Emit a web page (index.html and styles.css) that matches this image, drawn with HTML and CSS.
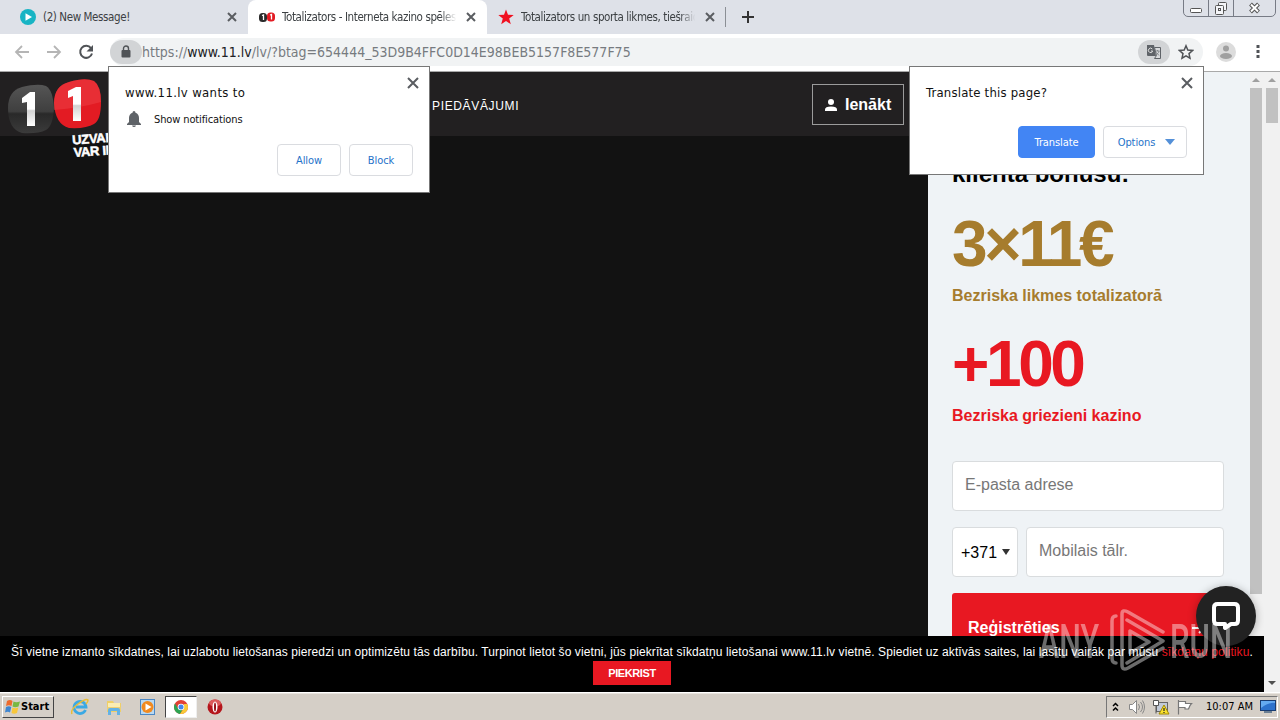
FILE: index.html
```html
<!DOCTYPE html>
<html lang="lv">
<head>
    <meta charset="UTF-8">
    <meta name="viewport" content="width=device-width, initial-scale=1.0">
    <title>Totalizators - Interneta kazino spēles</title>
    <link rel="stylesheet" href="styles.css">
</head>
<body>
<div class="screen">

    <!-- Browser tabs -->
    <div class="tabs">
        <div class="tab first">
            <svg class="favicon" width="16" height="16" viewBox="0 0 16 16"><circle cx="8" cy="8" r="8" fill="#18b4c4"/><path d="M5.500 4.200L12 8l-6.500 3.800z" fill="#fff"/></svg>
            <span class="tab-title t1">(2) New Message!</span>
            <svg class="close" width="10" height="10" viewBox="0 0 10 10"><path d="M1 1l8 8M9 1L1 9"/></svg>
        </div>
        <div class="tab active">
            <svg class="favicon" width="16" height="16" viewBox="0 0 16 16"><rect x="0" y="4" width="8" height="9" rx="3.500" fill="#2b2b2b"/><rect x="8" y="3.500" width="8" height="9" rx="3.500" fill="#e31b23"/><path d="M3 6.500l1.500-.5v5M11 6l1.500-.5v5" stroke="#fff" stroke-width="1.300" fill="none"/></svg>
            <span class="tab-title t2">Totalizators - Interneta kazino spēles</span>
            <svg class="close" width="10" height="10" viewBox="0 0 10 10"><path d="M1 1l8 8M9 1L1 9"/></svg>
        </div>
        <div class="tab last">
            <svg class="favicon" width="16" height="16" viewBox="0 0 16 16"><path d="M8 .5l2 5.300 5.700.2-4.500 3.500 1.600 5.700L8 12l-4.800 3.200 1.600-5.700L.3 6l5.700-.2z" fill="#f01020"/></svg>
            <span class="tab-title t3">Totalizators un sporta likmes, tiešraides</span>
            <svg class="close" width="10" height="10" viewBox="0 0 10 10"><path d="M1 1l8 8M9 1L1 9"/></svg>
        </div>
        <svg class="new-tab" width="12" height="12" viewBox="0 0 12 12"><path d="M6 0v12M0 6h12" stroke="#333" stroke-width="2"/></svg>
        <div class="window-buttons">
            <span class="wb-min"><svg width="24" height="16" viewBox="0 0 24 16"><rect x="6.500" y="8.500" width="11" height="4" rx="1" fill="#fff" stroke="#555"/></svg></span>
            <span class="wb-max"><svg width="24" height="16" viewBox="0 0 24 16"><g fill="#f4f5f8" stroke="#555"><rect x="9.500" y="2.500" width="8" height="8" rx="1"/><rect x="6.500" y="5.500" width="8" height="9" rx="1"/><rect x="9.500" y="8.500" width="2" height="2"/></g></svg></span>
            <span class="wb-close"><svg width="41" height="16" viewBox="0 0 41 16"><path d="M16.500 4l8 8M24.500 4l-8 8" stroke="#555" stroke-width="4"/><path d="M17 4.500l7 7M24 4.500l-7 7" stroke="#fff" stroke-width="2"/></svg></span>
        </div>
    </div>

    <!-- Address bar -->
    <div class="toolbar">
        <svg class="nav-icon" width="16" height="16" viewBox="0 0 16 16"><path d="M15 8H2M8 2L2 8l6 6" stroke="#b5b5b5" stroke-width="1.800" fill="none"/></svg>
        <svg class="nav-icon" width="16" height="16" viewBox="0 0 16 16"><path d="M1 8h13M8 2l6 6-6 6" stroke="#b5b5b5" stroke-width="1.800" fill="none"/></svg>
        <svg class="nav-icon" width="16" height="16" viewBox="0 0 16 16"><path d="M13 4.200A6 6 0 1 0 14 9.500" stroke="#505357" stroke-width="2" fill="none"/><path d="M15 1v6.500H8.500z" fill="#505357"/></svg>
        <div class="omnibox">
            <span class="lock"><svg width="10" height="13" viewBox="0 0 10 13"><path d="M2.500 6V3.500a2.500 2.500 0 0 1 5 0V6" stroke="#505357" stroke-width="1.400" fill="none"/><rect x="0.500" y="5" width="9" height="7.500" rx="1" fill="#505357"/></svg></span>
            <span class="url">https://<b>www.11.lv</b>/lv/?btag=654444_53D9B4FFC0D14E98BEB5157F8E577F75</span>
            <span class="translate-icon"><svg width="16" height="16" viewBox="0 0 16 16"><path d="M1 1h7l2 11H2a1 1 0 0 1-1-1z" fill="#5f6368"/><path d="M8.500 3.500h6v11h-6l2-3z" fill="#d8dadc" stroke="#5f6368"/><path d="M9.500 7h4M11.500 6v1M13 7c0 2-2 3-3 4M10.500 8.500l2.500 3" fill="none" stroke="#85898c"/><path d="M6.300 5A2.200 2.200 0 1 0 6.700 7H5" fill="none" stroke="#ddd"/></svg></span>
            <svg class="star" width="16" height="16" viewBox="0 0 16 16"><path d="M8 1.800l1.800 4.300 4.700.4-3.500 3.100 1 4.600L8 11.800l-4 2.400 1-4.600L1.500 6.500l4.700-.4z" fill="none" stroke="#505357" stroke-width="1.500"/></svg>
        </div>
        <svg class="avatar" width="20" height="20" viewBox="0 0 20 20"><circle cx="10" cy="10" r="10" fill="#dcdcdc"/><circle cx="10" cy="6.500" r="3" fill="#a0a0a0"/><ellipse cx="10" cy="14" rx="6" ry="3" fill="#a0a0a0"/></svg>
        <svg class="menu" width="4" height="16" viewBox="0 0 4 16"><path d="M.5 1h3v3h-3zM.5 6h3v3h-3zM.5 11h3v3h-3z" fill="#505357"/></svg>
    </div>

    <!-- Web page -->
    <div class="viewport">
        <div class="page">
            <div class="main">
                <header>
                    <svg class="logo" width="110" height="92" viewBox="0 0 110 92">
                        <defs>
                            <linearGradient id="gray" x1="0" y1="0" x2="0" y2="1"><stop offset="0" stop-color="#555"/><stop offset=".55" stop-color="#3f3f3f"/><stop offset=".6" stop-color="#292929"/><stop offset="1" stop-color="#3b3b3b"/></linearGradient>
                            <linearGradient id="digit" x1="0" y1="0" x2="0" y2="1"><stop offset=".5" stop-color="#fff"/><stop offset=".55" stop-color="#d2d2d2"/><stop offset="1" stop-color="#fff"/></linearGradient>
                        </defs>
                        <path d="M8 36Q8 19 22 15Q38 11 46 14Q53 18 54 36Q53 54 46 58Q38 62 22 61Q8 57 8 36Z" fill="url(#gray)"/>
                        <path d="M54 31Q54 14 69 10Q85 5 94 9Q101 14 101 30Q101 48 94 52Q86 57 69 56Q55 52 54 31Z" fill="#e31b23"/>
                        <path d="M54 38Q80 36 101 30Q101 14 94 9Q85 5 69 10Q54 14 54 31Z" fill="#ef4a50" opacity=".4"/>
                        <path d="M22 26L30 20h5v34h-8V30l-5 1z" fill="url(#digit)"/>
                        <path d="M68 19l8-4h5v34h-8V24l-5 2z" fill="url(#digit)"/>
                        <g class="slogan" transform="rotate(-4 73 72)"><text x="72.500" y="72.500">UZVARA</text><text x="73" y="85">VAR IR</text></g>
                    </svg>
                    <span class="nav-link">PIEDĀVĀJUMI</span>
                    <a class="login"><svg width="12" height="12" viewBox="0 0 12 12"><circle cx="6" cy="3" r="3" fill="#fff"/><path d="M0 12V10.500Q0 7.500 6 7.500T12 10.500V12z" fill="#fff"/></svg>Ienākt</a>
                </header>
            </div>
            <aside class="sidebar">
                <h2>klienta bonusu:</h2>
                <div class="amount gold">3×11€</div>
                <p class="gold">Bezriska likmes totalizatorā</p>
                <div class="amount red">+100</div>
                <p class="red">Bezriska griezieni kazino</p>
                <div class="field email">E-pasta adrese</div>
                <div class="phone-row">
                    <div class="field prefix">+371 <i class="caret"></i></div>
                    <div class="field phone">Mobilais tālr.</div>
                </div>
                <div class="register"><span>Reģistrēties</span><svg width="14" height="12" viewBox="0 0 14 12"><path d="M0 6h12M7 1l5 5-5 5" stroke="#fff" stroke-width="2" fill="none"/></svg></div>
            </aside>
            <div class="scrollbar inner"><i class="arrow-up"></i><div class="thumb"></div></div>
            <div class="cookies">
                <div class="cookie-text">Šī vietne izmanto sīkdatnes, lai uzlabotu lietošanas pieredzi un optimizētu tās darbību. Turpinot lietot šo vietni, jūs piekrītat sīkdatņu lietošanai www.11.lv vietnē. Spiediet uz aktīvās saites, lai lasītu vairāk par mūsu <a>sīkdatņu politiku</a>.</div>
                <div class="accept">PIEKRIST</div>
            </div>
            <div class="chat"><svg width="30" height="30" viewBox="0 0 30 30"><path d="M6.500 3h17Q27 3 27 6.500v13Q27 23 23.500 23H20l-6 4v-4H6.500Q3 23 3 19.500v-13Q3 3 6.500 3z" fill="none" stroke="#fff" stroke-width="4" stroke-linejoin="round"/></svg></div>
        </div>
        <div class="scrollbar outer"><i class="arrow-up"></i><div class="thumb"></div><i class="arrow-down"></i></div>
    </div>

    <!-- Windows taskbar -->
    <div class="taskbar">
        <div class="start"><svg width="16" height="16" viewBox="0 0 16 16"><path d="M2 2q3-2 5.500 0L6.500 7Q4 5.500 1 7z" fill="#ee6b2d"/><path d="M8.500 2.500Q11 4 15 2.500l-1.500 5Q10 9 7.500 7.500z" fill="#78b843"/><path d="M1 8q3-1.500 5.300 0L5 13.500Q3 12 0 13.500z" fill="#3f86d0"/><path d="M7.500 8.500Q10 10 13.300 8.500L12 14q-3 1.500-5.500 0z" fill="#f8c73a"/></svg>Start</div>
        <div class="quick">
            <svg width="18" height="18" viewBox="0 0 18 18"><path d="M14.500 12A6 6 0 1 1 15 9H5" fill="none" stroke="#3ba9e4" stroke-width="2.800"/><path d="M1 16Q-1 12 7 6T17 2q0 2-2 4" fill="none" stroke="#e9bd37" stroke-width="1.500"/></svg>
            <svg width="18" height="18" viewBox="0 0 18 18"><path d="M2 3h6l1 2h7v9H2z" fill="#efcf67"/><path d="M3 5h12v5H3z" fill="#fbedb2"/><path d="M2 9h14v3H2z" fill="#edcf76"/><path d="M3 17v-5q0-2 2-2h8q2 0 2 2v5h-3v-4H6v4z" fill="#64b2e5"/></svg>
            <svg width="18" height="18" viewBox="0 0 18 18"><rect x="1.500" y="1.500" width="14" height="15" fill="#b9d9f2" stroke="#4b88c5"/><circle cx="8.500" cy="9" r="6" fill="#f18a20"/><path d="M6.500 5.500l6 3.500-6 3.500z" fill="#fff"/></svg>
            <div class="running"><svg width="14" height="14" viewBox="0 0 14 14"><circle cx="7" cy="7" r="7" fill="#e24034"/><path d="M1 3.500A7 7 0 0 0 6 14l3-5-5-.5z" fill="#2ca452"/><path d="M14 7a7 7 0 0 1-8 7l4-6V4h3.300z" fill="#f8ca37"/><circle cx="7" cy="7" r="3.300" fill="#fff"/><circle cx="7" cy="7" r="2.500" fill="#4386ec"/></svg></div>
            <svg class="opera" width="18" height="18" viewBox="0 0 18 18"><circle cx="9" cy="9" r="7.500" fill="#b5161c"/><ellipse cx="9" cy="5" rx="6" ry="3.500" fill="#dc5b5b"/><ellipse cx="9" cy="9" rx="2.500" ry="5.500" fill="#fff"/><ellipse cx="9" cy="9" rx="1" ry="4.500" fill="#941015"/></svg>
        </div>
        <div class="tray">
            <svg width="7" height="10" viewBox="0 0 7 10"><path d="M1 4l2.500-2.500L6 4M1 8.500L3.500 6 6 8.500" fill="none" stroke="#000" stroke-width="1.500"/></svg>
            <svg width="18" height="16" viewBox="0 0 18 16"><path d="M1.500 5.500h3l4-4v13l-4-4h-3z" fill="#fff" stroke="#888"/><path d="M10.500 5q2 3 0 6M12.500 3q4 5 0 10M14.500 1.500q4 6.500 0 13" fill="none" stroke="#888"/></svg>
            <svg width="18" height="16" viewBox="0 0 18 16"><rect x="4.500" y="3.500" width="11" height="9" fill="#c2cad7" stroke="#666"/><path d="M1.500 1.500h5v5h-5zM4 7v7.500" fill="#fff" stroke="#555"/><path d="M12 6l5 9H7z" fill="#fae12e" stroke="#a38a00"/><path d="M12 9v3M12 13v1" stroke="#222" stroke-width="1.200"/></svg>
            <svg width="18" height="16" viewBox="0 0 18 16"><path d="M2.500 1v14.500M2.500 2.500h7v2h6q-2 2-3 5.500H9V8.500H2.500" fill="#fff" stroke="#777" stroke-width="1.200"/></svg>
            <span class="clock">10:07 AM</span>
            <svg width="16" height="13" viewBox="0 0 16 13"><rect x=".5" y=".5" width="15" height="10" fill="#2d72cc" stroke="#183c72"/><path d="M1 8Q8 2 15 3V1H1z" fill="#65aaf0"/><path d="M4 12h8" stroke="#6b7f93" stroke-width="2"/></svg>
        </div>
    </div>

    <!-- Permission popup -->
    <div class="popup permission">
        <svg class="close" width="12" height="12" viewBox="0 0 12 12"><path d="M1 1l10 10M11 1L1 11"/></svg>
        <div class="popup-title">www.11.lv wants to</div>
        <div class="request"><svg width="14" height="16" viewBox="0 0 14 16"><path d="M7 0q1.500 0 1.500 1.800Q12 3 12 7v4l2 2v1H0v-1l2-2V7q0-4 3.500-5.200Q5.500 0 7 0zM5 14.500h4Q8.500 16 7 16T5 14.500z" fill="#5f6368"/></svg><span>Show notifications</span></div>
        <div class="actions"><div class="btn">Allow</div><div class="btn">Block</div></div>
    </div>

    <!-- Translate popup -->
    <div class="popup translate">
        <svg class="close" width="12" height="12" viewBox="0 0 12 12"><path d="M1 1l10 10M11 1L1 11"/></svg>
        <div class="popup-title">Translate this page?</div>
        <div class="actions"><div class="btn primary">Translate</div><div class="btn options">Options <i class="caret"></i></div></div>
    </div>

    <svg class="watermark" width="200" height="66" viewBox="0 0 200 66">
        <text class="wm-text" x="3" y="50" textLength="60" lengthAdjust="spacingAndGlyphs">ANY</text>
        <text class="wm-text" x="134" y="50" textLength="62" lengthAdjust="spacingAndGlyphs">RUN</text>
        <g fill="none" stroke="#fff" stroke-width="3.500" stroke-linejoin="round" stroke-linecap="round"><path d="M80 8q-4 0-4 5v37q0 5 4 5M86 16V6q0-5 6-2l35 20M86 14v43q0 6 6 3l35-20M91 12l36 21-36 22M94 23v22l19-11z"/></g>
    </svg>
</div>
</body>
</html>
```
FILE: styles.css
```css
* {
    box-sizing: border-box;
}
body {
    margin: 0;
    font-family: "Liberation Sans", Arial, sans-serif;
    background: #121212;
}
svg {
    display: block;
    flex: none;
}
h2, p {
    margin: 0;
}
.screen {
    position: relative;
    width: 1280px;
    height: 720px;
    overflow: hidden;
    display: flex;
    flex-direction: column;
}

/* Tabs */
.tabs, .toolbar, .popup, .taskbar {
    font-family: "DejaVu Sans Condensed", "DejaVu Sans", sans-serif;
    font-stretch: condensed;
}
.tabs {
    height: 34px;
    display: flex;
    align-items: center;
    background: #dee1e8;
}
.tab {
    display: flex;
    align-items: center;
    height: 34px;
    font-size: 11.5px;
    letter-spacing: -0.4px;
    color: #3c4043;
}
.first {
    width: 248px;
    padding: 0 11px 0 20px;
}
.active {
    width: 239px;
    padding: 0 11px;
    background: #fff;
    border-radius: 8px 8px 0 0;
}
.last {
    width: 239px;
    padding: 0 10px 0 11px;
    height: 20px;
    border-right: 1px solid #8b8f95;
}
.tab-title {
    flex: 1;
    margin: 0 8px 0 7px;
    white-space: nowrap;
    overflow: hidden;
}
.t2, .t3 {
    -webkit-mask-image: linear-gradient(to right, #000 90%, transparent 99%);
    mask-image: linear-gradient(to right, #000 90%, transparent 99%);
}
.close {
    fill: none;
    stroke: #5a5d61;
    stroke-width: 2;
}
.new-tab {
    margin-left: 16px;
}
.window-buttons {
    display: flex;
    align-self: flex-start;
    margin: -1px 4px 0 auto;
    height: 18px;
    border: 1px solid #777b85;
    border-radius: 0 0 5px 5px;
}
.wb-max {
    border: solid #777b85;
    border-width: 0 1px;
}

/* Toolbar */
.toolbar {
    height: 38px;
    padding: 0 20px 2px 14px;
    display: flex;
    align-items: center;
    background: #fff;
    border-bottom: 1px solid #a9a9a9;
}
.nav-icon {
    margin-right: 16px;
}
.omnibox {
    width: 1093px;
    height: 28px;
    border-radius: 14px;
    background: #f1f3f4;
    display: flex;
    align-items: center;
    margin-right: 13px;
}
.lock, .translate-icon {
    width: 32px;
    height: 24px;
    border-radius: 12px;
    background: #d2d4d6;
    display: flex;
    align-items: center;
    justify-content: center;
}
.url {
    font-size: 14px;
    color: #777b80;
    white-space: nowrap;
}
.url b {
    font-weight: normal;
    color: #202124;
}
.translate-icon {
    margin-left: auto;
}
.star {
    margin: 0 9px 0 8px;
}
.menu {
    margin-left: auto;
}

/* Page */
.viewport {
    height: 620px;
    display: flex;
}
.page {
    position: relative;
    width: 1264px;
    display: flex;
    overflow: hidden;
}
.main {
    width: 928px;
    background: #121212;
}
header {
    height: 64px;
    background: #222021;
    display: flex;
    align-items: flex-start;
}
.slogan {
    font-size: 13px;
    font-weight: bold;
    fill: #fff;
    stroke: #fff;
    stroke-width: 0.5px;
    letter-spacing: -0.3px;
}
.nav-link {
    margin: 26px 0 0 322px;
    font-size: 12px;
    line-height: 16px;
    letter-spacing: 0.65px;
    color: #fff;
}
.login {
    width: 92px;
    height: 41px;
    margin: 12px 24px 0 auto;
    padding-left: 12px;
    border: 1px solid #9b9b9b;
    display: flex;
    align-items: center;
    gap: 8px;
    color: #fff;
    font-size: 16px;
    font-weight: bold;
}
.sidebar {
    width: 322px;
    padding: 86px 26px 0 24px;
    background: #eff3f6;
}
h2 {
    font-size: 24px;
    line-height: 32px;
}
.amount {
    margin-top: 19px;
    font-size: 64px;
    line-height: 70px;
    font-weight: bold;
    letter-spacing: -3.4px;
}
.amount.red {
    margin-top: 23px;
}
.sidebar p {
    margin-top: 7px;
    font-size: 16px;
    line-height: 20px;
    font-weight: bold;
}
.gold {
    color: #a67c2d;
}
.red {
    color: #e81822;
}
.field {
    height: 50px;
    padding: 0 0 2px 12px;
    display: flex;
    align-items: center;
    background: #fff;
    border: 1px solid #d9dcde;
    border-radius: 4px;
    font-size: 16px;
    color: #777;
}
.email {
    margin-top: 35px;
}
.phone-row {
    margin-top: 16px;
    display: flex;
    gap: 8px;
}
.prefix {
    width: 66px;
    padding: 2px 0 0 8px;
    color: #000;
}
.phone {
    flex: 1;
}
.caret {
    margin-left: 5px;
    border: solid transparent;
    border-width: 6px 4px 0;
    border-top-color: #333;
}
.prefix .caret {
    margin-bottom: 3px;
}
.register {
    height: 70px;
    margin-top: 16px;
    padding: 0 18px 0 16px;
    display: flex;
    align-items: center;
    justify-content: space-between;
    background: #e81822;
    border-radius: 3px 3px 0 0;
    color: #fff;
    font-size: 16px;
    font-weight: bold;
}
.scrollbar {
    display: flex;
    flex-direction: column;
    align-items: center;
    background: #f1f1f1;
}
.inner {
    width: 14px;
    padding-right: 2px;
}
.outer {
    width: 16px;
}
.scrollbar .thumb {
    width: 12px;
    background: #c1c1c1;
}
.inner .thumb {
    height: 506px;
}
.outer .thumb {
    height: 35px;
}
.arrow-up {
    margin: 6px 0;
    border: solid transparent;
    border-width: 0 4px 4px;
    border-bottom-color: #a0a0a0;
}
.arrow-down {
    margin: auto 0 7px;
    border: solid transparent;
    border-width: 4px 4px 0;
    border-top-color: #505050;
}
.cookies {
    position: absolute;
    left: 0;
    bottom: 0;
    width: 1264px;
    height: 56px;
    padding-top: 8px;
    background: #000;
    color: #fff;
    display: flex;
    flex-direction: column;
    align-items: center;
    gap: 1px;
}
.cookie-text {
    font-size: 12px;
    line-height: 16px;
    letter-spacing: 0.1px;
    white-space: nowrap;
}
.cookies a {
    color: #e81822;
}
.accept {
    width: 78px;
    height: 24px;
    background: #e81822;
    font-size: 11px;
    font-weight: bold;
    letter-spacing: -0.4px;
    line-height: 24px;
    text-align: center;
}
.chat {
    position: absolute;
    right: 8px;
    bottom: 46px;
    width: 60px;
    height: 60px;
    border-radius: 50%;
    background: #222;
    box-shadow: 0 1px 8px rgba(0, 0, 0, 0.3);
    display: flex;
    align-items: center;
    justify-content: center;
}

/* Taskbar */
.taskbar {
    height: 28px;
    background: #d5cfc7;
    border-top: 1px solid #fff;
    box-shadow: inset 0 1px #e8e4de;
    display: flex;
    align-items: center;
    font-size: 11px;
}
.start {
    width: 52px;
    height: 22px;
    margin-left: 2px;
    padding-left: 2px;
    display: flex;
    align-items: center;
    background: #d5cfc7;
    border: 1px solid #fff;
    border-right-color: #444;
    border-bottom-color: #444;
    font-size: 11px;
    font-weight: bold;
}
.quick {
    display: flex;
    align-items: center;
    margin-left: 17px;
    gap: 16px;
}
.running {
    width: 32px;
    height: 22px;
    margin: 0 -7px 0 -8px;
    background: #fff;
    border: 1px solid #444;
    border-right-color: #eee;
    border-bottom-color: #eee;
    display: flex;
    align-items: center;
    justify-content: center;
}
.tray {
    width: 172px;
    height: 22px;
    margin: 0 2px 0 auto;
    padding: 0 1px 0 5px;
    display: flex;
    align-items: center;
    border: 1px solid #777;
    border-right-color: #fff;
    border-bottom-color: #fff;
}
.tray svg {
    margin-right: 6px;
}
.tray svg:first-child {
    margin-right: 9px;
}
.tray svg:last-child {
    margin: 0 0 0 auto;
}
.clock {
    margin-left: 6px;
    white-space: nowrap;
}

/* Popups */
.popup {
    position: absolute;
    top: 66px;
    background: #fff;
    border: 1px solid #777;
    padding: 17px 16px 0;
    font-size: 11px;
    color: #111;
}
.permission {
    left: 108px;
    width: 322px;
    height: 127px;
}
.translate {
    left: 909px;
    width: 295px;
    height: 109px;
}
.popup .close {
    position: absolute;
    top: 10px;
    right: 10px;
}
.popup-title {
    font-size: 13px;
    line-height: 18px;
    letter-spacing: 0.2px;
}
.permission .popup-title {
    letter-spacing: 0.35px;
}
.request {
    display: flex;
    align-items: center;
    gap: 13px;
    height: 16px;
    margin: 9px 0 0 2px;
    letter-spacing: -0.12px;
}
.actions {
    display: flex;
    justify-content: flex-end;
    gap: 8px;
}
.permission .actions {
    margin-top: 17px;
}
.translate .actions {
    margin-top: 24px;
}
.btn {
    width: 64px;
    height: 32px;
    border: 1px solid #dadce0;
    border-radius: 4px;
    display: flex;
    align-items: center;
    justify-content: center;
    letter-spacing: -0.1px;
    color: #1f72c9;
}
.primary {
    width: 77px;
    background: #4285f4;
    border-color: #4285f4;
    color: #fff;
}
.options {
    width: 84px;
    padding-left: 3px;
}
.options .caret {
    margin-left: 10px;
    border-width: 6px 5px 0;
    border-top-color: #5490d8;
}

/* Watermark */
.watermark {
    position: absolute;
    left: 1036px;
    top: 608px;
    opacity: 0.42;
}
.wm-text {
    font-family: Roboto, sans-serif;
    font-size: 49px;
    font-weight: 500;
    fill: #fff;
}
```
